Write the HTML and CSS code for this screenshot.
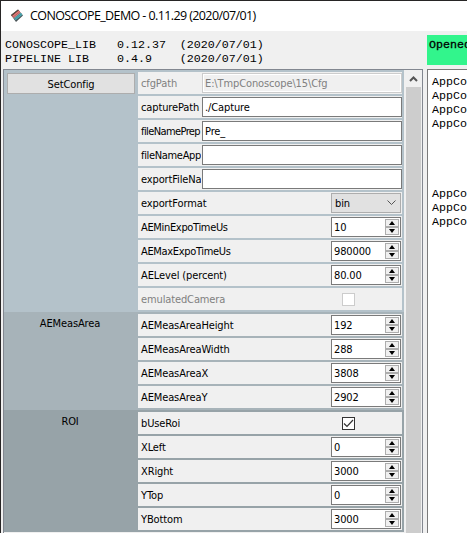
FILE: index.html
```
<!DOCTYPE html>
<html lang="en">
<head>
<meta charset="utf-8">
<title>CONOSCOPE_DEMO</title>
<link rel="stylesheet" href="styles.css">
</head>
<body>
<div class="window">
  <header class="titlebar">
    <svg class="logo" width="14" height="14" viewBox="0 0 14 14">
      <path d="M1 6 8 .5l5 6L6 13z" fill="#4b5356"/>
      <path d="M1 6 8 .5l1.500 1.800L2.500 8z" fill="#59483f"/>
      <path d="M2 7 8.800 1.600l1.800 2.200L3.800 9.200z" fill="#ef7776"/>
      <path d="M4 9.200 10.800 3.800l1.600 2L5.600 11.300z" fill="#45b5c0"/>
      <path d="M3 8.200 9.800 2.800M4.800 10.200l6.800-5.400" stroke="#62605f" stroke-width=".5"/>
    </svg>
    <h1>CONOSCOPE_DEMO - 0.11.29 (2020/07/01)</h1>
  </header>
  <main class="content">
    <section class="left">
      <pre class="versions">CONOSCOPE_LIB   0.12.37  (2020/07/01)
PIPELINE LIB    0.4.9    (2020/07/01)</pre>
      <div class="panel">
        <div class="groups">
          <div class="group general">
            <div class="side"><button class="set">SetConfig</button></div>
            <div class="rows">
              <div class="row off"><label>cfgPath</label><div class="field">E:\TmpConoscope\15\Cfg</div></div>
              <div class="row"><label>capturePath</label><div class="field">./Capture</div></div>
              <div class="row"><label class="tighter">fileNamePrep</label><div class="field">Pre_</div></div>
              <div class="row"><label class="tight">fileNameApp</label><div class="field"></div></div>
              <div class="row"><label>exportFileNa</label><div class="field"></div></div>
              <div class="row wide"><label>exportFormat</label><div class="combo">bin<svg width="11" height="6" viewBox="0 0 11 6"><path d="M1.500 .5l4 4 4-4" fill="none" stroke="#555"/></svg></div></div>
              <div class="row wide"><label class="tight">AEMinExpoTimeUs</label><div class="spin">10<span class="steps"><i class="up"></i><i class="down"></i></span></div></div>
              <div class="row wide"><label class="tight">AEMaxExpoTimeUs</label><div class="spin">980000<span class="steps"><i class="up"></i><i class="down"></i></span></div></div>
              <div class="row wide"><label>AELevel (percent)</label><div class="spin">80.00<span class="steps"><i class="up"></i><i class="down"></i></span></div></div>
              <div class="row wide off"><label>emulatedCamera</label><div class="check"></div></div>
            </div>
          </div>
          <div class="group meas">
            <div class="side"><h2>AEMeasArea</h2></div>
            <div class="rows">
              <div class="row wide"><label>AEMeasAreaHeight</label><div class="spin">192<span class="steps"><i class="up"></i><i class="down"></i></span></div></div>
              <div class="row wide"><label>AEMeasAreaWidth</label><div class="spin">288<span class="steps"><i class="up"></i><i class="down"></i></span></div></div>
              <div class="row wide"><label>AEMeasAreaX</label><div class="spin">3808<span class="steps"><i class="up"></i><i class="down"></i></span></div></div>
              <div class="row wide"><label>AEMeasAreaY</label><div class="spin">2902<span class="steps"><i class="up"></i><i class="down"></i></span></div></div>
            </div>
          </div>
          <div class="group roi">
            <div class="side"><h2>ROI</h2></div>
            <div class="rows">
              <div class="row wide"><label>bUseRoi</label><div class="check"><svg width="11" height="11" viewBox="0 0 11 11"><path d="M1 5.500l3 3 6-6.500" fill="none" stroke="#333" stroke-width="1.200"/></svg></div></div>
              <div class="row wide"><label>XLeft</label><div class="spin">0<span class="steps"><i class="up"></i><i class="down"></i></span></div></div>
              <div class="row wide"><label>XRight</label><div class="spin">3000<span class="steps"><i class="up"></i><i class="down"></i></span></div></div>
              <div class="row wide"><label>YTop</label><div class="spin">0<span class="steps"><i class="up"></i><i class="down"></i></span></div></div>
              <div class="row wide"><label>YBottom</label><div class="spin">3000<span class="steps"><i class="up"></i><i class="down"></i></span></div></div>
            </div>
          </div>
        </div>
        <div class="scroll"><svg width="15" height="17" viewBox="0 0 15 17"><path d="M4 11l3.500-3.500L11 11" fill="none" stroke="#555" stroke-width="2"/></svg><div class="thumb"></div></div>
      </div>
    </section>
    <section class="right">
      <div class="status">Opened</div>
      <pre class="log">AppCo
AppCo
AppCo
AppCo




AppCo
AppCo
AppCo</pre>
    </section>
  </main>
</div>
</body>
</html>
```
FILE: styles.css
```
* { box-sizing: border-box; }
body { margin: 0; overflow: hidden; background: #f0f0f0; color: #000; font: 11px/16px "DejaVu Sans Condensed", "DejaVu Sans", sans-serif; font-stretch: condensed; letter-spacing: -0.12px; }
pre, h1, h2 { margin: 0; font-weight: normal; }
.window { width: 467px; height: 533px; overflow: hidden; border-top: 1px solid #272525; border-left: 1px solid #272525; display: flex; flex-direction: column; }
.titlebar { height: 30px; flex: none; background: #fff; display: flex; align-items: center; padding-left: 9px; gap: 6px; }
.logo { flex: none; }
h1 { font: 12.5px/20px "Open Sans", sans-serif; letter-spacing: -0.6px; white-space: nowrap; }
.content { flex: 1; min-height: 0; display: flex; gap: 4px; }
.left { width: 422px; flex: none; padding-left: 2px; display: flex; flex-direction: column; }
.versions, .log, .status { font: 11.67px/14px "Liberation Mono", monospace; letter-spacing: 0; }
.versions { height: 38px; flex: none; padding: 7px 0 0 2px; }
.panel { flex: 1; min-height: 0; border: 1px solid #828790; border-bottom: 0; display: flex; background: #f0f0f0; overflow: hidden; }
.groups { width: 400px; flex: none; }
.group { display: flex; }
.general { background: #b4c2ca; }
.meas { background: #a7b3b9; }
.roi { background: #97a3a8; }
.side { width: 134px; padding: 2px 3px 0; text-align: center; }
h2 { font-size: 11px; line-height: 16px; padding: 2px 2px 0 0; }
.set { display: block; width: 128px; height: 21px; margin-top: 1px; padding: 2px 0 0; font: inherit; letter-spacing: inherit; background: #e1e1e1; border: 1px solid #adadad; }
.rows { width: 264px; display: grid; gap: 2px; padding: 2px 0; }
.row { height: 22px; background: #f0f0f0; display: grid; grid-template-columns: 64px 200px; align-items: center; white-space: nowrap; }
.row label { margin-right: 1px; padding: 2px 0 0 3px; overflow: hidden; }
.row .tight { letter-spacing: -0.33px; }
.row .tighter { letter-spacing: -0.6px; }
.wide { grid-template-columns: 193px 70px; }
.off { color: #808080; }
.field, .spin, .combo { height: 20px; line-height: 19px; border: 1px solid #7a7a7a; background: #fff; padding-left: 2px; }
.off .field { background: #f0f0f0; border-color: #ccc; box-shadow: inset 0 0 0 1px #fff; }
.combo { display: flex; align-items: center; justify-content: space-between; background: #e1e1e1; border-color: #adadad; padding: 0 3px; }
.spin { display: flex; justify-content: space-between; }
.steps { width: 14px; height: 16px; margin: 1px 1px 0 0; display: grid; grid-template-rows: 8px 8px; }
.steps i { border: 1px solid #adadad; background: #f0f0f0; display: flex; align-items: center; justify-content: center; }
.steps i::before { content: ""; width: 6px; height: 4px; background: #000; }
.up::before { clip-path: polygon(50% 0, 100% 100%, 0 100%); }
.down::before { clip-path: polygon(0 0, 100% 0, 50% 100%); }
.check { width: 13px; height: 13px; margin-left: 11px; border: 1px solid #333; background: #fff; }
.check svg { display: block; }
.off .check { border-color: #ccc; }
.scroll { width: 15px; margin-left: 2px; display: flex; flex-direction: column; }
.scroll svg { flex: none; }
.thumb { flex: 1; background: #cdcdcd; }
.right { flex: 1; min-width: 0; display: flex; flex-direction: column; padding-top: 4px; }
.status { height: 30px; flex: none; background: #32f58c; -webkit-text-stroke: 0.3px #000; padding: 3px 0 0 2px; overflow: hidden; }
.log { flex: 1; min-height: 0; margin-top: 4px; background: #fff; border: 1px solid #7a7a7a; border-right: 0; border-bottom: 0; padding: 5px 0 0 4px; overflow: hidden; }
```
